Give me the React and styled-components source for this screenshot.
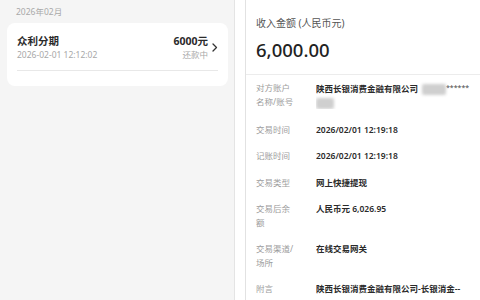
import React from "react";
import styled, { createGlobalStyle } from "styled-components";

const GlobalStyle = createGlobalStyle`
  html, body {
    margin: 0;
    padding: 0;
    background: #ffffff;
  }
  body {
    font-family: "Noto Sans", "Noto Sans CJK SC", sans-serif;
    -webkit-font-smoothing: antialiased;
  }
`;

const Screen = styled.div`
  display: flex;
  width: 480px;
  height: 300px;
  overflow: hidden;
  background: #fff;
`;

const ListPane = styled.div`
  flex: 0 0 234px;
  background: #f5f5f5;
  border-right: 1px solid #e4e4e4;
  display: flex;
  flex-direction: column;
`;
const MonthLabel = styled.div`
  padding: 6px 16px 0;
  font-size: 8.5px;
  line-height: 12px;
  color: #a9a9a9;
`;
const BillCard = styled.div`
  margin: 5px 6px 0 7px;
  padding: 11px 10px 15px;
  background: #fff;
  border-radius: 8px;
`;
const BillTop = styled.div`
  display: flex;
  justify-content: space-between;
  align-items: center;
`;
const BillCol = styled.div`
  display: flex;
  flex-direction: column;
  align-items: ${(p) => (p.right ? "flex-end" : "flex-start")};
`;
const BillTitle = styled.div`
  font-size: 10.5px;
  line-height: 14px;
  font-weight: 700;
  color: #2b2b2b;
`;
const BillSub = styled.div`
  font-size: 8.5px;
  line-height: 13px;
  color: #a8a8a8;
`;
const BillRight = styled.div`
  display: flex;
  align-items: center;
  gap: 4px;
`;
const BillDivider = styled.div`
  margin-top: 9px;
  height: 1px;
  background: #e8e8e8;
`;

const Gutter = styled.div`
  flex: 0 0 10px;
  background: #fff;
`;

const DetailPane = styled.div`
  flex: 1;
  border-left: 1px solid #e2e2e2;
  display: flex;
  flex-direction: column;
`;
const Header = styled.div`
  padding: 16px 10px 12px;
  border-bottom: 1px solid #ececec;
`;
const HeadLabel = styled.div`
  font-size: 10px;
  line-height: 14px;
  color: #555;
`;
const Amount = styled.div`
  margin-top: 8px;
  font-size: 18.5px;
  line-height: 24px;
  font-weight: 500;
  color: #222;
`;
const Section = styled.div`
  padding: ${(p) => p.pad || "0"};
`;
const Band = styled.div`
  height: 5px;
  background: #f2f2f2;
`;
const Row = styled.div`
  display: flex;
  padding: ${(p) => (p.tight ? "6px 10px 5px" : "6.5px 10px")};
  font-size: 8.5px;
  line-height: 13.5px;
`;
const Label = styled.div`
  flex: 0 0 60px;
  color: #9c9c9c;
`;
const Value = styled.div`
  flex: 1;
  color: #2a2a2a;
  font-weight: 600;
  white-space: nowrap;
  overflow: hidden;
`;
const Blur = styled.span`
  display: inline-block;
  vertical-align: middle;
  width: ${(p) => p.w}px;
  height: 11px;
  margin-left: ${(p) => p.ml || 0}px;
  background: #cfcfcf;
  border-radius: 2px;
  filter: blur(1.5px);
`;
const Stars = styled.span`
  font-size: 7px;
  font-weight: 400;
  color: #444;
  vertical-align: 2px;
`;

const rows = [
  { label: "交易时间", value: "2026/02/01 12:19:18" },
  { label: "记账时间", value: "2026/02/01 12:19:18" },
  { label: "交易类型", value: "网上快捷提现" },
  { label: ["交易后余", "额"], value: "人民币元 6,026.95" },
  { label: ["交易渠道/", "场所"], value: "在线交易网关" },
  { label: "附言", value: "陕西长银消费金融有限公司-长银消金--" },
];

function Chevron() {
  return (
    <svg width="6" height="9" viewBox="0 0 6 9">
      <polyline
        points="1,1 4.5,4.5 1,8"
        fill="none"
        stroke="#333"
        strokeWidth="1.3"
        strokeLinecap="round"
        strokeLinejoin="round"
      />
    </svg>
  );
}

function LabelText({ label }) {
  if (Array.isArray(label)) {
    return (
      <>
        {label[0]}
        <br />
        {label[1]}
      </>
    );
  }
  return label;
}

export default function App() {
  return (
    <>
      <GlobalStyle />
      <Screen>
        <ListPane>
          <MonthLabel>2026年02月</MonthLabel>
          <BillCard>
            <BillTop>
              <BillCol>
                <BillTitle>众利分期</BillTitle>
                <BillSub>2026-02-01 12:12:02</BillSub>
              </BillCol>
              <BillRight>
                <BillCol right>
                  <BillTitle>6000元</BillTitle>
                  <BillSub>还款中</BillSub>
                </BillCol>
                <Chevron />
              </BillRight>
            </BillTop>
            <BillDivider />
          </BillCard>
        </ListPane>
        <Gutter />
        <DetailPane>
          <Header>
            <HeadLabel>收入金额 (人民币元)</HeadLabel>
            <Amount>6,000.00</Amount>
          </Header>
          <Row tight>
            <Label>
              对方账户
              <br />
              名称/账号
            </Label>
            <Value>
              陕西长银消费金融有限公司
              <Blur w={24} ml={4} />
              <Stars>******</Stars>
              <br />
              <Blur w={18} />
            </Value>
          </Row>
          <Band />
          <Section pad="2px 0 0">
            {rows.map((r) => (
              <Row key={r.value + r.label}>
                <Label>
                  <LabelText label={r.label} />
                </Label>
                <Value>{r.value}</Value>
              </Row>
            ))}
          </Section>
        </DetailPane>
      </Screen>
    </>
  );
}
